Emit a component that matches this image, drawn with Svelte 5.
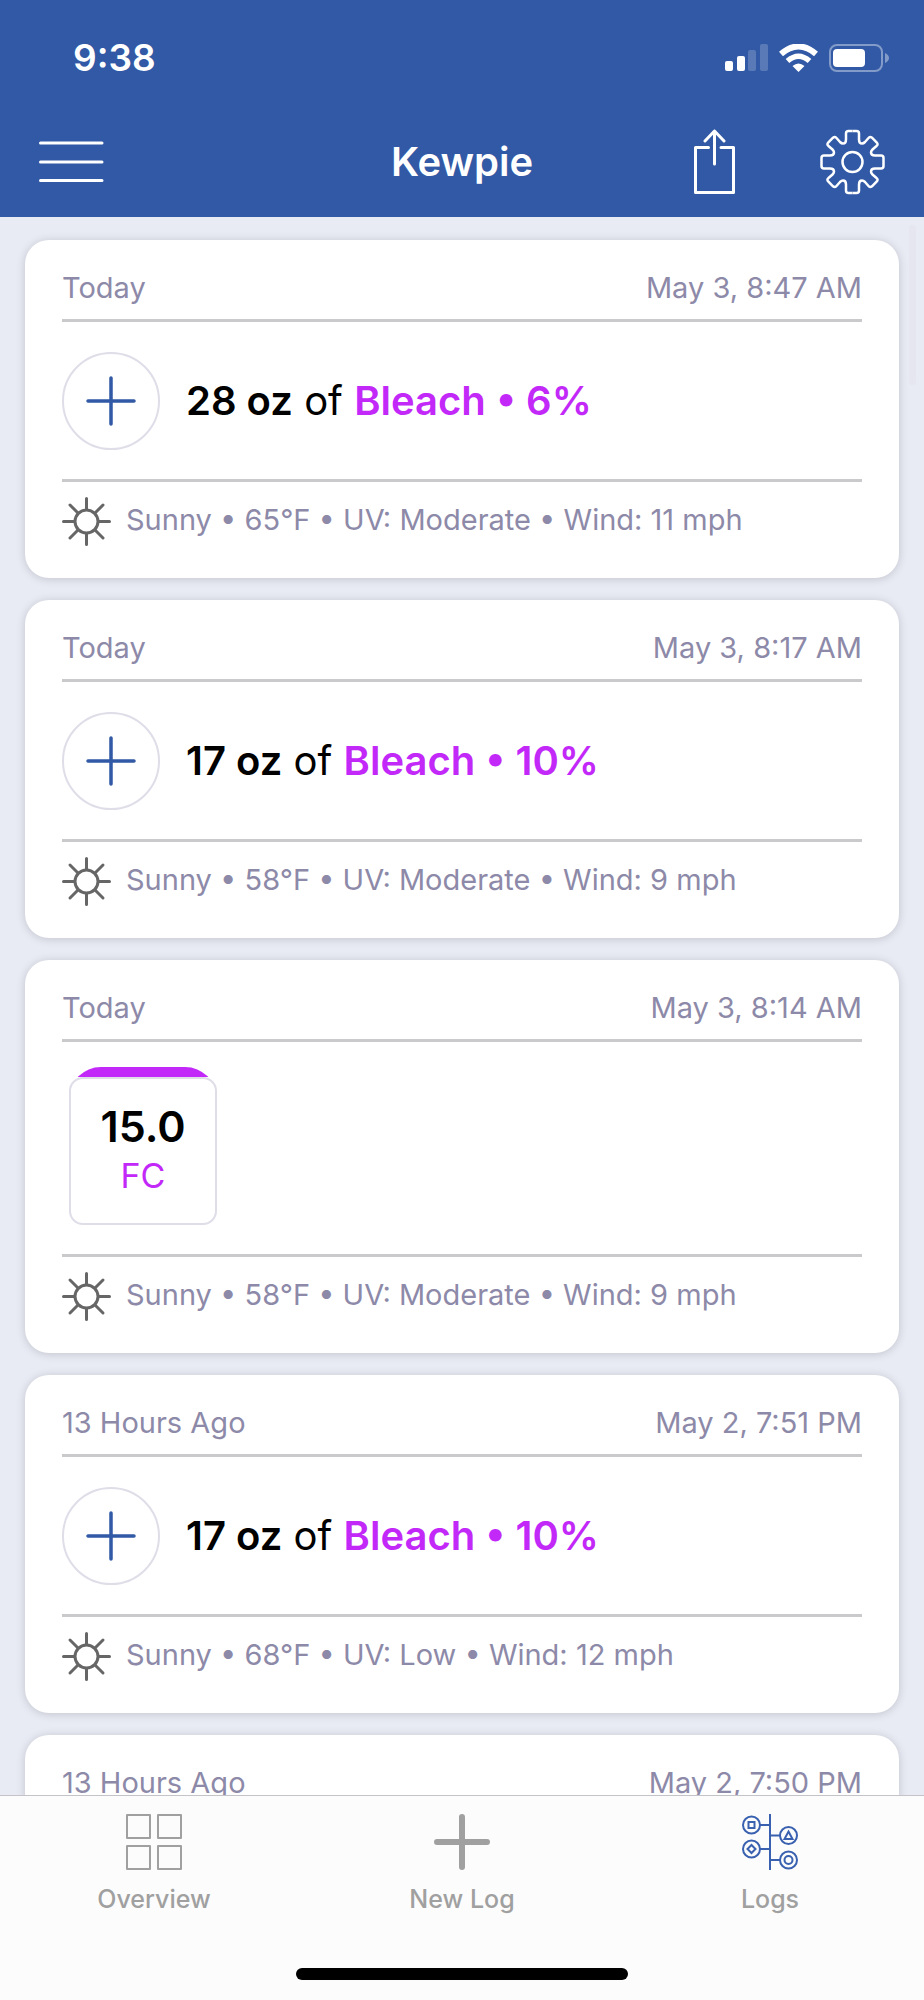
<script>
    let activeTab = $state('Logs');

    const tabs = ['Overview', 'New Log', 'Logs'];

    // entries without details yet only show their header row
    const logs = [
        { ago: 'Today', date: 'May 3, 8:47 AM', amount: '28 oz', chemical: 'Bleach • 6%', weather: 'Sunny • 65°F • UV: Moderate • Wind: 11 mph' },
        { ago: 'Today', date: 'May 3, 8:17 AM', amount: '17 oz', chemical: 'Bleach • 10%', weather: 'Sunny • 58°F • UV: Moderate • Wind: 9 mph' },
        { ago: 'Today', date: 'May 3, 8:14 AM', reading: '15.0', unit: 'FC', weather: 'Sunny • 58°F • UV: Moderate • Wind: 9 mph' },
        { ago: '13 Hours Ago', date: 'May 2, 7:51 PM', amount: '17 oz', chemical: 'Bleach • 10%', weather: 'Sunny • 68°F • UV: Low • Wind: 12 mph' },
        { ago: '13 Hours Ago', date: 'May 2, 7:50 PM' },
    ];
</script>

<div class="app">
    <header>
        <div class="status">
            <span class="time">9:38</span>
            <div class="indicators">
                <svg width="43" height="28" viewBox="0 0 43 28" fill="#fff" aria-hidden="true">
                    <rect x="0" y="17" width="8" height="10" rx="2" />
                    <rect x="12" y="12" width="8" height="15" rx="2" />
                    <rect x="23" y="6" width="8" height="21" rx="2" opacity=".2" />
                    <rect x="35" y="0" width="8" height="27" rx="2" opacity=".2" />
                </svg>
                <svg width="39" height="28" viewBox="0 0 39 28" fill="none" stroke="#fff" aria-hidden="true">
                    <path d="M2 10 Q19.500 -5 37 10" stroke-width="6" />
                    <path d="M8.500 17 Q19.500 7.500 30.500 17" stroke-width="5.500" />
                    <path d="M13.500 22 Q19.500 17 25.500 22 L19.500 28 Z" fill="#fff" stroke="none" />
                </svg>
                <svg width="60" height="28" viewBox="0 0 60 28" aria-hidden="true">
                    <rect x="1" y="1" width="52" height="26" rx="7" fill="none" stroke="#fff" stroke-width="2" opacity=".4" />
                    <rect x="4" y="5" width="32" height="18" rx="4" fill="#fff" />
                    <path d="M56 9 Q60 11 60 14 Q60 17 56 19 Z" fill="#fff" opacity=".4" />
                </svg>
            </div>
        </div>
        <div class="navbar">
            <button class="icon-button" aria-label="Menu">
                <svg width="65" height="42" viewBox="0 0 65 42" stroke="#fff" stroke-width="3" stroke-linecap="round">
                    <path d="M1.500 2 H63 M1.500 21 H63 M1.500 39.500 H63" />
                </svg>
            </button>
            <h1>Kewpie</h1>
            <div class="actions">
                <button class="icon-button" aria-label="Share">
                    <svg width="41" height="66" viewBox="0 0 41 66" fill="none" stroke="#fff" stroke-width="3" stroke-linecap="round" stroke-linejoin="round">
                        <path d="M14.500 18.500 H1.500 V63.500 H39.500 V18.500 H27" />
                        <path d="M20.500 35 V2 M11 12 L20.500 2 L30 12" />
                    </svg>
                </button>
                <button class="icon-button" aria-label="Settings">
                    <svg width="65" height="66" viewBox="-32.500 -33 65 66" fill="none" stroke="#fff" stroke-width="2.500">
                        <circle r="10" />
                        {#each [0, 90, 180, 270] as angle}
                            <path
                                transform="rotate({angle})"
                                d="M0 -31 H4 Q6.500 -31 6.500 -28.500 V-22.500 Q6.500 -18.500 9.500 -18.500 Q11 -18.500 12.500 -20 L16 -24 Q17.500 -26 19.500 -24.300 L24.300 -19.500 Q26 -17.500 24 -16 L20 -12.500 Q18.500 -11 18.500 -9.500 Q18.500 -6.500 22.500 -6.500 H28.500 Q31 -6.500 31 -4 V0"
                            />
                        {/each}
                    </svg>
                </button>
            </div>
        </div>
    </header>

    <div class="content">
        <main>
            {#each logs as log}
                <article>
                    <div class="head">
                        <span>{log.ago}</span>
                        <time>{log.date}</time>
                    </div>
                    {#if log.reading}
                        <div class="body body-reading">
                            <div class="cap"></div>
                            <div class="reading">
                                <b>{log.reading}</b>
                                <span>{log.unit}</span>
                            </div>
                        </div>
                    {:else if log.amount}
                        <div class="body">
                            <div class="circle">
                                <svg width="50" height="50" viewBox="0 0 50 50" stroke="#3159a5" stroke-width="3.500" stroke-linecap="round" aria-hidden="true">
                                    <path d="M25 2 V48 M2 25 H48" />
                                </svg>
                            </div>
                            <p><b>{log.amount}</b> of <b class="chemical">{log.chemical}</b></p>
                        </div>
                    {/if}
                    {#if log.weather}
                        <div class="weather">
                            <svg width="49" height="49" viewBox="-24.500 -24.500 49 49" fill="none" stroke="#666" stroke-width="3" stroke-linecap="round" aria-hidden="true">
                                <circle r="11.500" />
                                <path d="M0 -23 V-12 M0 23 V12 M-23 0 H-12 M23 0 H12 M-16.500 -16.500 L-8.500 -8.500 M16.500 -16.500 L8.500 -8.500 M-16.500 16.500 L-8.500 8.500 M16.500 16.500 L8.500 8.500" />
                            </svg>
                            <span>{log.weather}</span>
                        </div>
                    {/if}
                </article>
            {/each}
        </main>
        <div class="scroll-thumb"></div>
    </div>

    <footer>
        <nav>
            {#each tabs as tab}
                <button class="tab" aria-pressed={activeTab === tab} onclick={() => (activeTab = tab)}>
                    {#if tab === 'Overview'}
                        <svg width="56" height="56" viewBox="0 0 56 56" fill="none" stroke="currentColor" stroke-width="2" stroke-linejoin="round">
                            <path d="M1 1 H24 V24 H1 Z M32 1 H55 V24 H32 Z M1 32 H24 V55 H1 Z M32 32 H55 V55 H32 Z" />
                        </svg>
                    {:else if tab === 'New Log'}
                        <svg width="56" height="56" viewBox="0 0 56 56" stroke="currentColor" stroke-width="6" stroke-linecap="round">
                            <path d="M28 3 V53 M3 28 H53" />
                        </svg>
                    {:else}
                        <svg width="56" height="56" viewBox="0 0 56 56" fill="none" stroke="currentColor" stroke-width="2">
                            <path d="M28 0 V56 M18 11 H28 M28 21.500 H38 M18 35 H28 M28 46 H38" />
                            <circle cx="9.500" cy="11" r="8.500" />
                            <circle cx="9.500" cy="35" r="8.500" />
                            <circle cx="46.500" cy="21.500" r="8.500" />
                            <circle cx="46.500" cy="46" r="8.500" />
                            <path d="M6.500 8 H12.500 V14 H6.500 Z M9.500 31 L13.500 35 L9.500 39 L5.500 35 Z M46.500 17.500 L50.500 25 H42.500 Z" />
                            <circle cx="46.500" cy="46" r="4" />
                        </svg>
                    {/if}
                    <span>{tab}</span>
                </button>
            {/each}
        </nav>
        <div class="home-bar"></div>
    </footer>
</div>

<style>
:global(body) {
    margin: 0;
}
.app {
    display: flex;
    flex-direction: column;
    height: 100vh;
    font-family: Inter, "Liberation Sans", sans-serif;
    font-size: 29px;
    line-height: 36px;
    color: #8d89a8;
    background: #e8eaf4;
}
button {
    font: inherit;
    border: none;
    background: none;
    padding: 0;
}
svg {
    display: block;
    flex-shrink: 0;
}
b {
    font-weight: 600;
}
header {
    flex-shrink: 0;
    background: #3159a5;
    color: white;
}
.status {
    display: flex;
    justify-content: space-between;
    align-items: center;
    height: 75px;
    padding: 20px 35px 12px 73px;
}
.time {
    font-size: 37px;
    font-weight: 600;
}
.indicators {
    display: flex;
    gap: 11px;
}
.navbar {
    display: grid;
    grid-template-columns: 1fr auto 1fr;
    align-items: center;
    height: 110px;
    padding: 0 39px;
}
h1 {
    margin: 0;
    font-size: 40px;
    font-weight: 600;
    line-height: 48px;
}
.icon-button {
    justify-self: start;
}
.actions {
    display: flex;
    justify-content: flex-end;
    gap: 85px;
}
.content {
    position: relative;
    flex: 1;
    min-height: 0;
}
main {
    display: flex;
    flex-direction: column;
    gap: 22px;
    height: 100%;
    box-sizing: border-box;
    padding: 23px 25px;
    overflow-y: auto;
    scrollbar-width: none;
}
.scroll-thumb {
    position: absolute;
    top: 8px;
    right: 8px;
    width: 7px;
    height: 160px;
    border-radius: 4px;
    background: #e5e6ef;
}
article {
    flex-shrink: 0;
    padding: 0 37px;
    border-radius: 24px;
    background: white;
    box-shadow: 0 1px 10px rgba(0, 0, 0, 0.16);
}
.head {
    display: flex;
    justify-content: space-between;
    padding: 30px 0 13px;
    border-bottom: 3px solid #cacacc;
}
.body {
    display: flex;
    align-items: center;
    gap: 26px;
    padding: 30px 0 29px;
}
.circle {
    display: flex;
    align-items: center;
    justify-content: center;
    width: 94px;
    height: 94px;
    border: 2px solid #dfdde8;
    border-radius: 50%;
}
p {
    margin: 0;
    font-size: 40px;
    line-height: 48px;
    color: black;
}
.chemical {
    color: #c228f8;
}
.body-reading {
    flex-direction: column;
    align-items: flex-start;
    gap: 0;
    padding: 25px 7px 29px;
}
/* only the top slice of a rounder box shows above the reading */
.cap {
    width: 148px;
    height: 10px;
    overflow: hidden;
}
.cap::before {
    content: "";
    display: block;
    height: 64px;
    border-radius: 32px;
    background: #c228f8;
}
.reading {
    display: flex;
    flex-direction: column;
    align-items: center;
    gap: 4px;
    box-sizing: border-box;
    width: 148px;
    height: 148px;
    padding-top: 23px;
    border: 2px solid #dfdde8;
    border-radius: 14px;
    font-size: 34px;
    line-height: 44px;
    color: #c228f8;
}
.reading b {
    font-size: 43px;
    line-height: 48px;
    color: black;
}
.weather {
    display: flex;
    gap: 15px;
    padding: 15px 0 32px;
    border-top: 3px solid #cacacc;
    line-height: 46px;
}
footer {
    flex-shrink: 0;
    border-top: 1px solid #c4c4c8;
    background: #fcfcfc;
}
nav {
    display: grid;
    grid-template-columns: repeat(3, 1fr);
    padding: 18px 0 54px;
}
.tab {
    display: flex;
    flex-direction: column;
    align-items: center;
    gap: 14px;
    font-size: 25px;
    font-weight: 500;
    line-height: 30px;
    color: #a0a0a0;
}
.tab[aria-pressed="true"] svg {
    color: #3961b0;
}
.home-bar {
    width: 36%;
    height: 12px;
    margin: 0 auto 20px;
    border-radius: 6px;
    background: black;
}
</style>
